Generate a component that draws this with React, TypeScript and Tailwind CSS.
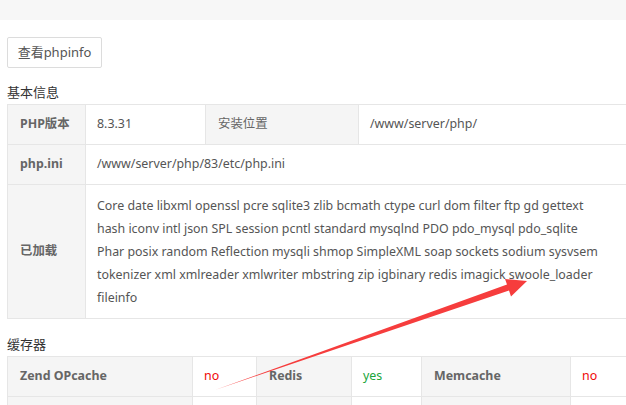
const extensions = [
  "Core date libxml openssl pcre sqlite3 zlib bcmath ctype curl dom filter ftp gd gettext",
  "hash iconv intl json SPL session pcntl standard mysqlnd PDO pdo_mysql pdo_sqlite",
  "Phar posix random Reflection mysqli shmop SimpleXML soap sockets sodium sysvsem",
  "tokenizer xml xmlreader xmlwriter mbstring zip igbinary redis imagick swoole_loader",
  "fileinfo",
];

const cacheRow = [
  { name: "Zend OPcache", on: false },
  { name: "Redis", on: true },
  { name: "Memcache", on: false },
];

const label = "bg-[#f5f5f5] font-bold text-[#666] px-3 border border-[#e6e6e6]";
const cell = "px-[11px] text-[#555] border border-[#e6e6e6]";

const App = () => {
  return (
    <div
      className="relative w-[626px] h-[405px] overflow-hidden bg-white text-[12.4px]"
      style={{ fontFamily: '"Noto Sans", "Noto Sans CJK SC", sans-serif' }}
    >
      <div className="h-5 bg-[#f7f7f7]" />

      <div className="pl-[7px] pt-[17px] w-[720px]">
        <button className="h-[31px] w-[95px] border border-[#dcdcdc] rounded-[2px] bg-white text-[#555] text-[13px]">
          查看phpinfo
        </button>

        <h3 className="mt-[17px] mb-[5px] text-[#333] leading-[14px] text-[13px]">基本信息</h3>
        <table className="border-collapse w-[700px] table-fixed">
          <colgroup>
            <col className="w-[78px]" />
            <col className="w-[120px]" />
            <col className="w-[153px]" />
            <col />
          </colgroup>
          <tbody>
            <tr className="h-10">
              <td className={label}>PHP版本</td>
              <td className={cell}>8.3.31</td>
              <td className={label + " !font-normal"}>安装位置</td>
              <td className={cell}>/www/server/php/</td>
            </tr>
            <tr className="h-10">
              <td className={label}>php.ini</td>
              <td className={cell} colSpan={3}>
                /www/server/php/83/etc/php.ini
              </td>
            </tr>
            <tr>
              <td className={label}>已加载</td>
              <td className={cell + " py-[9px] leading-[23px]"} colSpan={3}>
                {extensions.map((line) => (
                  <div key={line}>{line}</div>
                ))}
              </td>
            </tr>
          </tbody>
        </table>

        <h3 className="mt-[18px] mb-[5px] text-[#333] leading-[14px] text-[13px]">缓存器</h3>
        <table className="border-collapse w-[700px] table-fixed">
          <colgroup>
            <col className="w-[185px]" />
            <col className="w-[64px]" />
            <col className="w-[95px]" />
            <col className="w-[70px]" />
            <col className="w-[149px]" />
            <col />
          </colgroup>
          <tbody>
            <tr className="h-10">
              {cacheRow.map((c) => (
                <>
                  <td key={c.name} className={label}>
                    {c.name}
                  </td>
                  <td
                    key={c.name + "-v"}
                    className={
                      "px-[11px] border border-[#e6e6e6] " +
                      (c.on ? "text-[#20a53a]" : "text-[#ef0808]")
                    }
                  >
                    {c.on ? "yes" : "no"}
                  </td>
                </>
              ))}
            </tr>
            <tr className="h-10">
              <td className={label} />
              <td className={cell} />
              <td className={label} />
              <td className={cell} />
              <td className={label} />
              <td className={cell} />
            </tr>
          </tbody>
        </table>
      </div>

      {/* red annotation arrow */}
      <svg className="absolute inset-0 pointer-events-none" width="626" height="405">
        <polygon
          points="215,390 507,284.5 505,279 527,281 511,296.5 509,290.5"
          fill="#f63d3d"
        />
      </svg>
    </div>
  );
};

export default App;
